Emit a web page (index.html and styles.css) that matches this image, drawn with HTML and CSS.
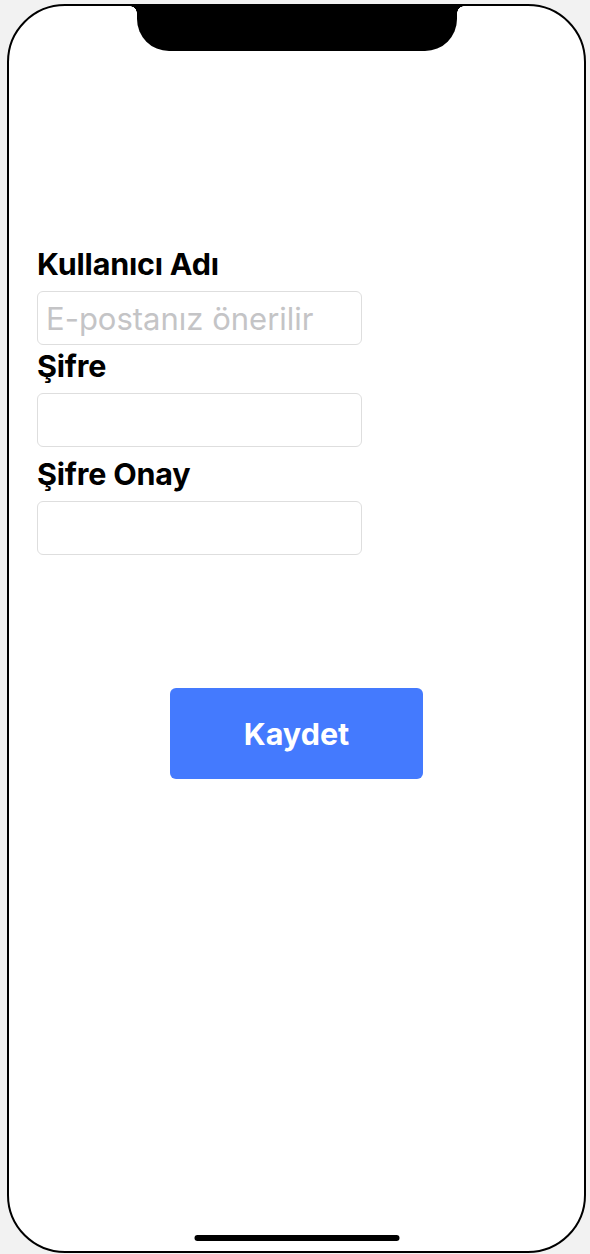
FILE: index.html
```html
<!DOCTYPE html>
<html lang="tr">
<head>
<meta charset="utf-8">
<title>Kayıt</title>
<link rel="stylesheet" href="styles.css">
</head>
<body>
<div class="phone">
  <div class="notch"></div>
  <form class="form">
    <label class="label label-first" for="user">Kullanıcı Adı</label>
    <input class="field" id="user" type="text" placeholder="E-postanız önerilir">
    <label class="label label-second" for="pass">Şifre</label>
    <input class="field" id="pass" type="password">
    <label class="label label-third" for="pass2">Şifre Onay</label>
    <input class="field" id="pass2" type="password">
    <div class="actions">
      <button class="save" type="button">Kaydet</button>
    </div>
  </form>
  <div class="home-indicator"></div>
</div>
</body>
</html>
```
FILE: styles.css
```css
* { box-sizing: border-box; }
html, body { margin: 0; padding: 0; }
body {
  background: #f2f2f2;
  font-family: "Inter", "Liberation Sans", sans-serif;
  height: 1254px;
  overflow: hidden;
}
.phone {
  position: relative;
  margin: 4px 0 0 7px;
  width: 579px;
  height: 1249px;
  background: #fff;
  border: 2px solid #000;
  border-radius: 58px;
  overflow: hidden;
}
.notch {
  position: absolute;
  top: 0;
  left: 50%;
  transform: translateX(-50%);
  width: 320px;
  height: 45px;
  background: #000;
  border-radius: 0 0 32px 32px;
}
.notch::before,
.notch::after {
  content: "";
  position: absolute;
  top: 0;
  width: 7px;
  height: 7px;
}
.notch::before {
  left: -7px;
  background: radial-gradient(circle at 0 100%, transparent 6.5px, #000 7px);
}
.notch::after {
  right: -7px;
  background: radial-gradient(circle at 100% 100%, transparent 6.5px, #000 7px);
}
.form {
  display: flex;
  flex-direction: column;
  align-items: flex-start;
  padding: 240px 0 0 28px;
}
.label {
  display: block;
  font-size: 30.5px;
  font-weight: 700;
  line-height: 36px;
  color: #000;
  letter-spacing: -0.2px;
}
.label-first { margin-bottom: 9px; }
.label-second { margin-top: 3px; margin-bottom: 9px; }
.label-third { margin-top: 9px; margin-bottom: 9px; }
.field {
  width: 325px;
  height: 54px;
  border: 1px solid #dedede;
  border-radius: 6px;
  padding: 0 8px;
  font-family: inherit;
  font-size: 31px;
  color: #000;
  background: #fff;
  outline: none;
}
.field::placeholder {
  color: #c4c4c6;
}
.actions {
  align-self: stretch;
  display: flex;
  justify-content: center;
  margin-top: 133px;
  padding-right: 28px;
}
.save {
  width: 253px;
  height: 91px;
  border: none;
  border-radius: 6px;
  background: #447afe;
  color: #fff;
  font-family: inherit;
  font-size: 30.5px;
  font-weight: 700;
}
.home-indicator {
  position: absolute;
  bottom: 10px;
  left: 50%;
  transform: translateX(-50%);
  width: 205px;
  height: 6px;
  border-radius: 3px;
  background: #000;
}
```
